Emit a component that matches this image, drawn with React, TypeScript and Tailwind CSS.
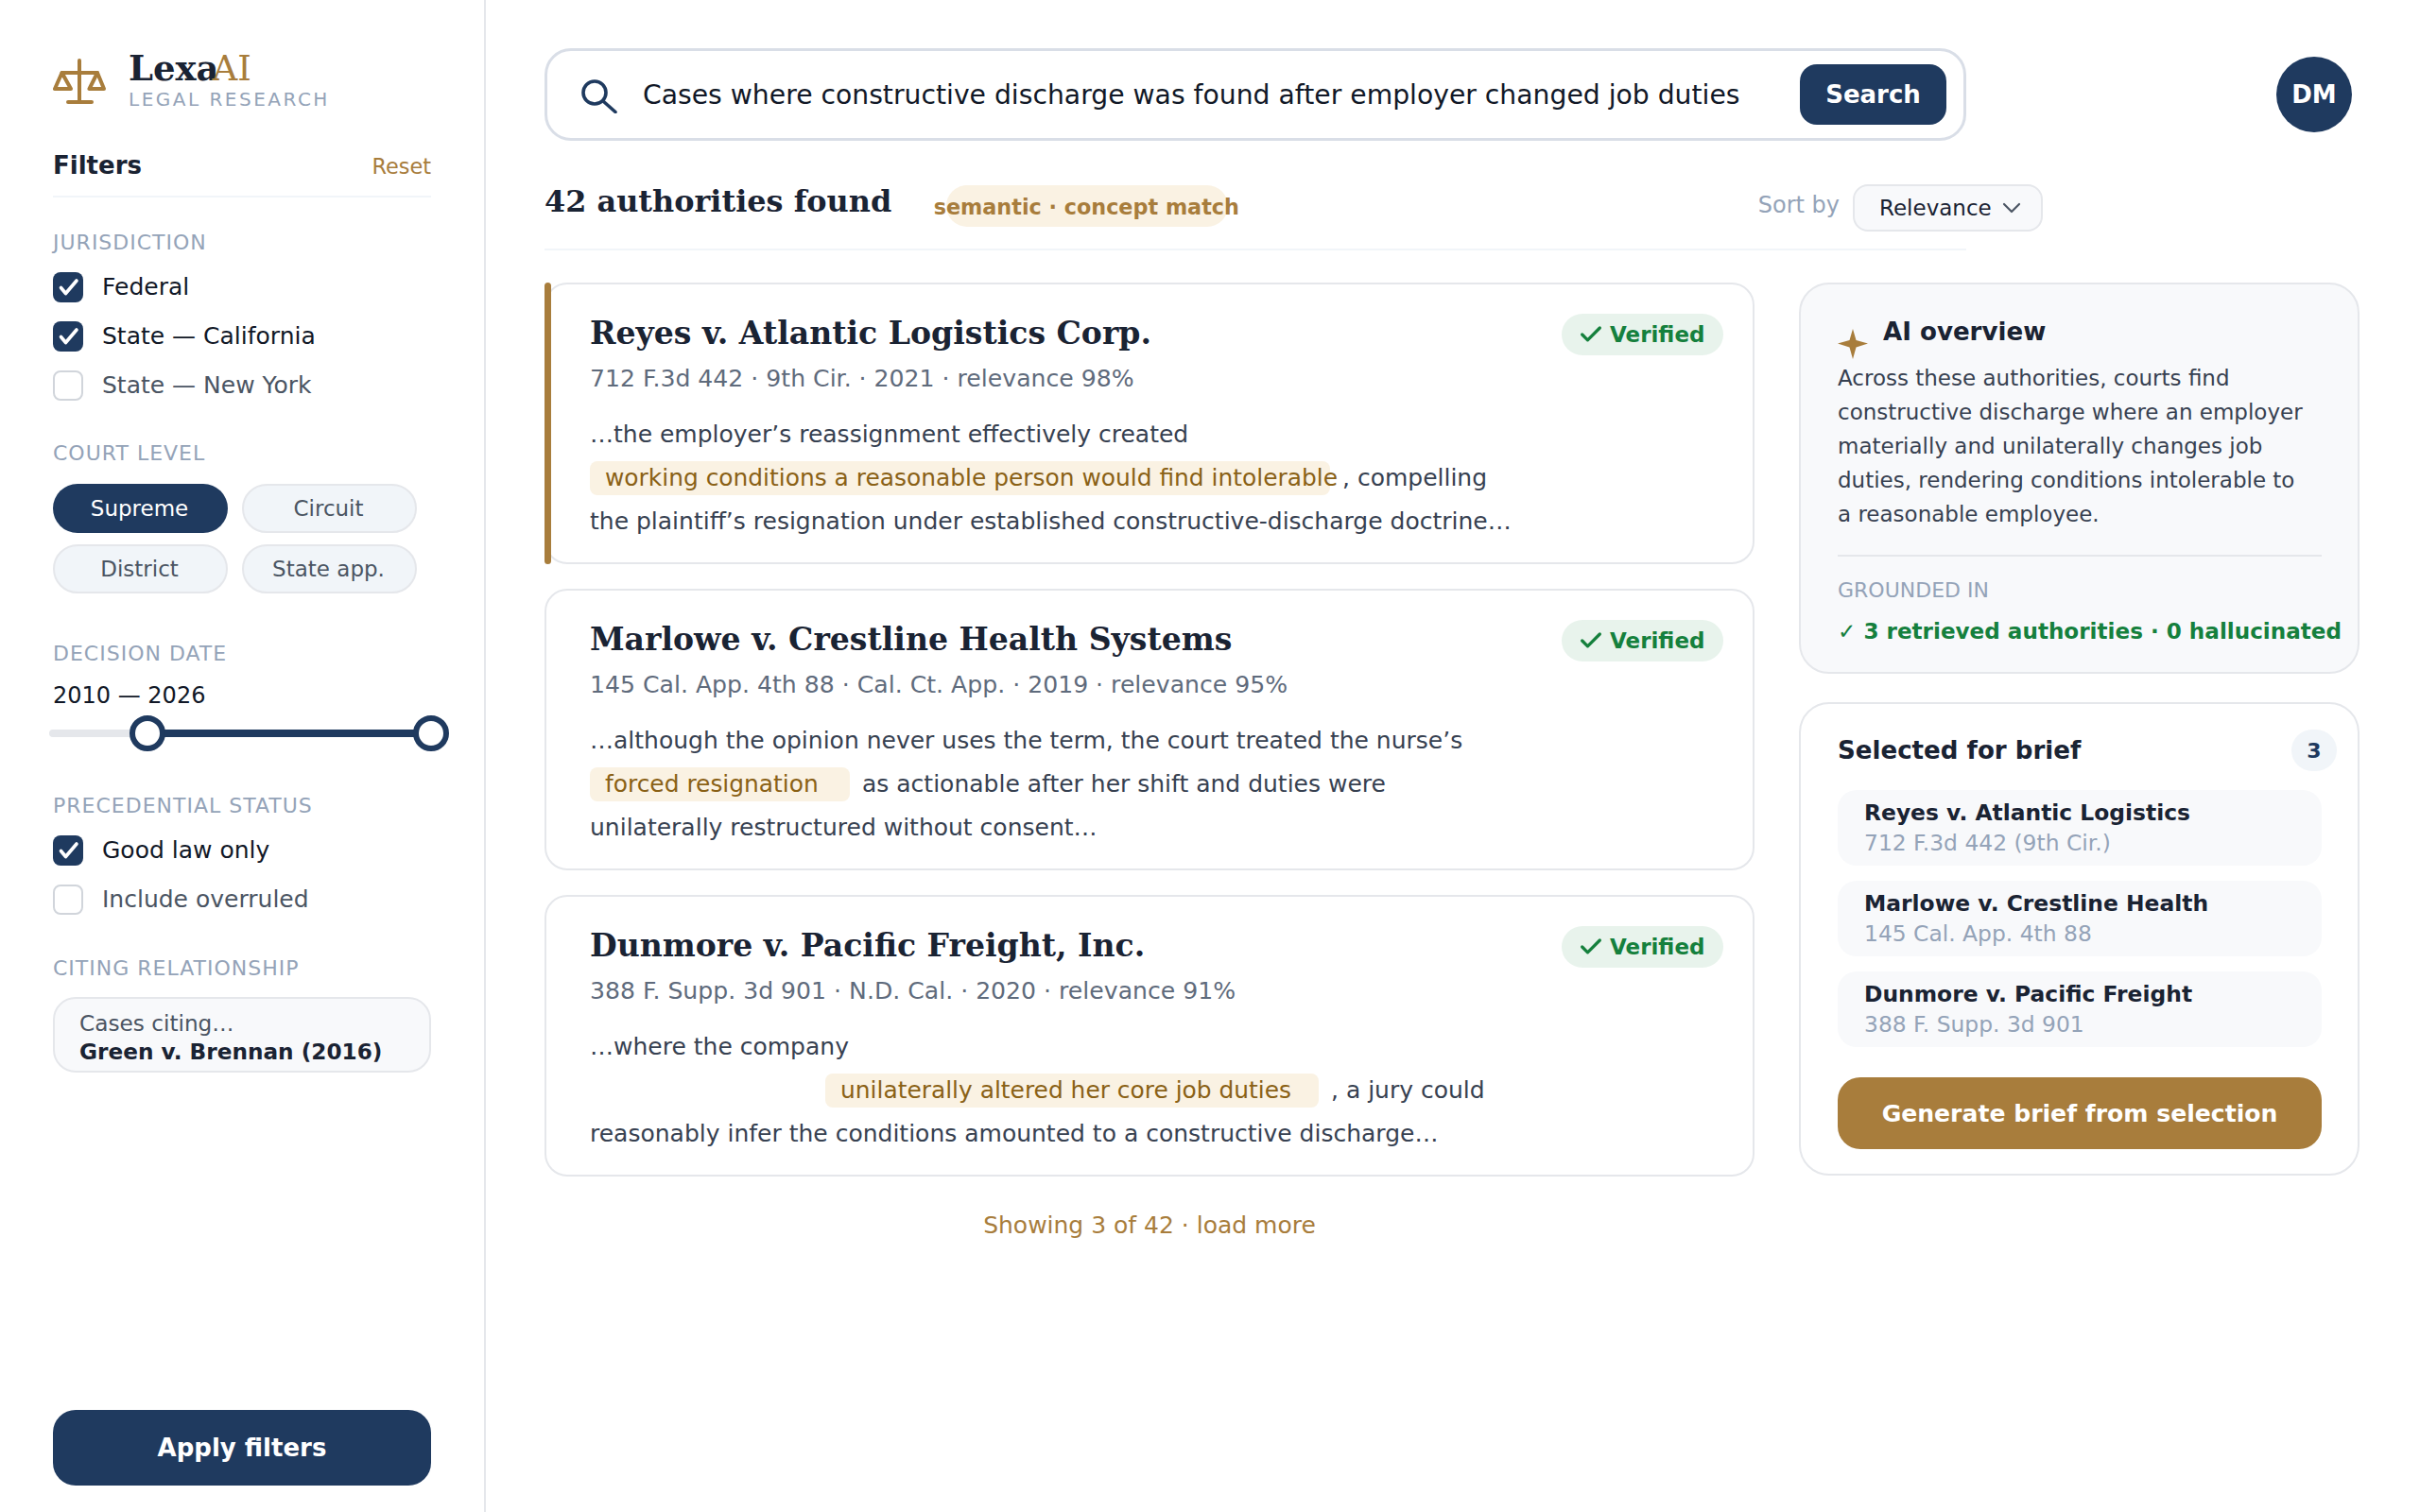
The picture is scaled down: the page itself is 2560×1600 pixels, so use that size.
import { Check, ChevronDown } from 'lucide-react';

const sans = "font-['DejaVu_Sans',sans-serif]";
const serif = "font-['DejaVu_Serif',serif]";

function Label({ children }: { children: string }) {
  return <div className="text-[22px] leading-[26px] tracking-[1px] text-[#94a3b8]">{children}</div>;
}

function CheckRow({ label, checked }: { label: string; checked?: boolean }) {
  return (
    <div className="flex h-[32px] items-center gap-[20px]">
      {checked ? (
        <span className="flex h-[32px] w-[32px] items-center justify-center rounded-[8px] bg-[#1f3a5f]">
          <svg width="32" height="32" viewBox="0 0 32 32" fill="none" stroke="white" strokeWidth="3.6" strokeLinecap="round" strokeLinejoin="round">
            <path d="M8.5 16.5L13.5 22.5L25 9" />
          </svg>
        </span>
      ) : (
        <span className="h-[32px] w-[32px] rounded-[8px] border-2 border-[#d1d5db] bg-white" />
      )}
      <span className={`text-[25px] ${checked ? 'text-[#111827]' : 'text-[#4b5563]'}`}>{label}</span>
    </div>
  );
}

function Pill({ label, active }: { label: string; active?: boolean }) {
  return (
    <div
      className={`flex h-[52px] w-[185px] items-center justify-center rounded-full pr-[2px] text-[23px] ${
        active ? 'bg-[#1f3a5f] text-white' : 'border-2 border-[#e5e7eb] bg-[#f1f5f9] text-[#4b5563]'
      }`}
    >
      {label}
    </div>
  );
}

function Verified() {
  return (
    <div className="flex h-[44px] w-[171px] shrink-0 items-center gap-[6px] rounded-full bg-[#e8f3ec] pl-[17px] text-[23px] font-bold text-[#15803d]">
      <Check size={28} strokeWidth={2.8} />
      Verified
    </div>
  );
}

function Mark({ text, width }: { text: string; width: string }) {
  return (
    <span className={`flex h-[36px] items-center whitespace-nowrap rounded-[8px] bg-[#faf2e3] pl-[16px] text-[24.9px] text-[#8a6116] ${width}`}>
      {text}
    </span>
  );
}

function CaseCard({ title, meta, accent, children }: { title: string; meta: string; accent?: boolean; children: React.ReactNode }) {
  return (
    <div className="relative h-[298px] rounded-[24px] border-2 border-[#e5e7eb] bg-white pl-[46px] pr-[31px] pt-[31px]">
      {accent && <div className="absolute -left-[2px] -top-[2px] h-[298px] w-[7px] rounded-full bg-[#a87d3c]" />}
      <div className="flex items-start justify-between">
        <div className={`${serif} -mt-[1px] text-[33.1px] font-bold leading-[44px] text-[#1a2333]`}>{title}</div>
        <Verified />
      </div>
      <div className="mt-[9px] text-[25.15px] leading-[32px] text-[#5f6b7c]">{meta}</div>
      <div className="mt-[20px] text-[25px] text-[#374151]">{children}</div>
    </div>
  );
}

function Line({ children, className = '' }: { children: React.ReactNode; className?: string }) {
  return <div className={`flex h-[46px] items-center whitespace-nowrap ${className}`}>{children}</div>;
}

function BriefItem({ name, cite }: { name: string; cite: string }) {
  return (
    <div className="flex h-[80px] flex-col justify-center rounded-[20px] bg-[#f8f9fb] pl-[28px] text-[23.4px] leading-[32px]">
      <div className="font-bold text-[#1a2333]">{name}</div>
      <div className="text-[#94a3b8]">{cite}</div>
    </div>
  );
}

export default function App() {
  return (
    <div className={`${sans} flex h-[1600px] w-[2560px] overflow-hidden bg-white text-[#1a2333]`}>
      <aside className="flex h-full w-[514px] shrink-0 flex-col border-r-2 border-[#e5e7eb] pl-[56px] pr-[56px]">
        <div className="mt-[54px] flex h-[62px] items-start gap-[24px]">
          <svg width="56" height="48" viewBox="0 0 56 48" fill="none" stroke="#a87d3c" strokeWidth="4" strokeLinecap="round" strokeLinejoin="round" className="mt-[8px] shrink-0">
            <path d="M28 2V46M16 46H41M9.5 15H47" />
            <path d="M9.5 15L2 32H19ZM47 15L38.5 32H54Z" />
          </svg>
          <div>
            <div className={`${serif} text-[37px] font-bold leading-[36px]`}>
              Lexa<span className="-ml-[7px] font-normal text-[#a87d3c]">AI</span>
            </div>
            <div className="mt-[3px] text-[20px] leading-[22px] tracking-[2.5px] text-[#94a3b8]">LEGAL RESEARCH</div>
          </div>
        </div>

        <div className="mt-[42px] flex h-[51px] items-start justify-between border-b-2 border-[#f1f5f9]">
          <span className="text-[26px] font-bold leading-[34px]">Filters</span>
          <span className="mt-[4px] text-[22.4px] leading-[28px] text-[#a87d3c]">Reset</span>
        </div>

        <div className="mt-[35px]"><Label>JURISDICTION</Label></div>
        <div className="mt-[18px] flex flex-col gap-[20px]">
          <CheckRow label="Federal" checked />
          <CheckRow label="State — California" checked />
          <CheckRow label="State — New York" />
        </div>

        <div className="mt-[43px]"><Label>COURT LEVEL</Label></div>
        <div className="mt-[19px] flex w-[385px] flex-wrap gap-x-[15px] gap-y-[12px]">
          <Pill label="Supreme" active />
          <Pill label="Circuit" />
          <Pill label="District" />
          <Pill label="State app." />
        </div>

        <div className="mt-[51px]"><Label>DECISION DATE</Label></div>
        <div className="mt-[15px] text-[24px] leading-[32px] text-[#111827]">2010 — 2026</div>
        <div className="relative mt-[5px] h-[38px] w-[400px]">
          <div className="absolute -left-[4px] top-[15px] h-[8px] w-[408px] rounded-full bg-[#e5e7eb]" />
          <div className="absolute left-[100px] top-[15px] h-[8px] w-[300px] bg-[#1f3a5f]" />
          <div className="absolute left-[81px] top-0 h-[38px] w-[38px] rounded-full border-[6px] border-[#1f3a5f] bg-white" />
          <div className="absolute left-[381px] top-0 h-[38px] w-[38px] rounded-full border-[6px] border-[#1f3a5f] bg-white" />
        </div>

        <div className="mt-[45px]"><Label>PRECEDENTIAL STATUS</Label></div>
        <div className="mt-[18px] flex flex-col gap-[20px]">
          <CheckRow label="Good law only" checked />
          <CheckRow label="Include overruled" />
        </div>

        <div className="mt-[44px]"><Label>CITING RELATIONSHIP</Label></div>
        <div className="mt-[17px] flex h-[80px] flex-col justify-center rounded-[24px] border-2 border-[#e5e7eb] bg-[#f8f9fb] pl-[26px] pt-[5px] text-[23.2px] leading-[30px]">
          <div className="text-[#4b5563]">Cases citing…</div>
          <div className="font-bold">Green v. Brennan (2016)</div>
        </div>

        <button className="mb-[28px] mt-auto flex h-[80px] w-[400px] shrink-0 items-center justify-center rounded-[24px] bg-[#1f3a5f] text-[26px] font-bold text-white">
          Apply filters
        </button>
      </aside>

      <main className="min-w-0 flex-1 pl-[62px]">
        <div className="mt-[51px] flex items-start">
          <div className="flex h-[98px] w-[1504px] items-center rounded-[28px] border-[3px] border-[#d9dee7] pl-[36px] pr-[18px]">
            <svg width="38" height="36" viewBox="0 0 38 36" fill="none" stroke="#1f3a5f" strokeWidth="3.6" strokeLinecap="round" className="mt-[3px] shrink-0">
              <circle cx="14" cy="14" r="12" />
              <path d="M23 23L36 34.5" />
            </svg>
            <span className="ml-[27px] whitespace-nowrap pt-[2px] text-[28.24px] text-[#111827]">
              Cases where constructive discharge was found after employer changed job duties
            </span>
            <button className="ml-auto flex h-[64px] w-[155px] items-center justify-center rounded-[18px] bg-[#1f3a5f] text-[26px] font-bold text-white">
              Search
            </button>
          </div>
          <div className="ml-[328px] mt-[9px] flex h-[80px] w-[80px] items-center justify-center rounded-full bg-[#1f3a5f] text-[26px] font-bold text-white">
            DM
          </div>
        </div>

        <div className="mt-[46px] flex h-[70px] w-[1504px] items-start border-b-2 border-[#f1f5f9]">
          <span className={`${serif} -mt-[2px] text-[31.9px] font-bold leading-[40px]`}>42 authorities found</span>
          <div className="ml-[58px] mt-[1px] flex h-[44px] w-[298px] justify-center rounded-full bg-[#faf2e3] pr-[2px] text-[22.3px] font-bold leading-[46px] text-[#a87d3c]">
            <span className="whitespace-nowrap">semantic · concept match</span>
          </div>
          <span className="ml-auto text-[24px] leading-[44px] text-[#94a3b8]">Sort by</span>
          <div className="ml-[14px] mr-[-81px] flex h-[50px] w-[201px] items-center gap-[5px] rounded-[16px] border-2 border-[#e5e7eb] bg-[#f8f9fb] pl-[26px] text-[23px]">
            Relevance
            <ChevronDown size={32} strokeWidth={1.6} className="shrink-0 text-[#4b5563]" />
          </div>
        </div>

        <div className="mt-[34px] flex items-start gap-[47px]">
          <div className="w-[1280px] shrink-0">
            <div className="flex flex-col gap-[26px]">
              <CaseCard accent title="Reyes v. Atlantic Logistics Corp." meta="712 F.3d 442 · 9th Cir. · 2021 · relevance 98%">
                <Line>…the employer’s reassignment effectively created</Line>
                <Line>
                  <Mark text="working conditions a reasonable person would find intolerable" width="w-[783px]" />
                  <span className="ml-[13px]">, compelling</span>
                </Line>
                <Line>the plaintiff’s resignation under established constructive-discharge doctrine…</Line>
              </CaseCard>
              <CaseCard title="Marlowe v. Crestline Health Systems" meta="145 Cal. App. 4th 88 · Cal. Ct. App. · 2019 · relevance 95%">
                <Line>…although the opinion never uses the term, the court treated the nurse’s</Line>
                <Line>
                  <Mark text="forced resignation" width="w-[275px]" />
                  <span className="ml-[13px]">as actionable after her shift and duties were</span>
                </Line>
                <Line>unilaterally restructured without consent…</Line>
              </CaseCard>
              <CaseCard title="Dunmore v. Pacific Freight, Inc." meta="388 F. Supp. 3d 901 · N.D. Cal. · 2020 · relevance 91%">
                <Line>…where the company</Line>
                <Line className="pl-[249px]">
                  <Mark text="unilaterally altered her core job duties" width="w-[522px]" />
                  <span className="ml-[13px]">, a jury could</span>
                </Line>
                <Line>reasonably infer the conditions amounted to a constructive discharge…</Line>
              </CaseCard>
            </div>
            <div className="mt-[36px] text-center text-[25px] leading-[32px] text-[#a87d3c]">Showing 3 of 42 · load more</div>
          </div>

          <div className="flex w-[593px] shrink-0 flex-col gap-[30px]">
            <div className="h-[414px] rounded-[32px] border-2 border-[#e5e7eb] bg-[#f8f9fb] pl-[39px] pr-[38px] pt-[33px]">
              <div className="flex h-[46px] items-start gap-[16px]">
                <svg width="32" height="32" viewBox="0 0 32 32" className="mt-[14px] shrink-0" fill="#a87d3c">
                  <path d="M16 0L19.5 12L32 15.5L19.5 19.5L16 32L12.5 19.5L0 15.5L12.5 12Z" />
                </svg>
                <span className="text-[26.1px] font-bold leading-[34px]">AI overview</span>
              </div>
              <p className="mt-[2px] whitespace-nowrap text-[23px] leading-[36px] text-[#374151]">
                Across these authorities, courts find
                <br />
                constructive discharge where an employer
                <br />
                materially and unilaterally changes job
                <br />
                duties, rendering conditions intolerable to
                <br />
                a reasonable employee.
              </p>
              <div className="mt-[25px] h-[2px] w-[512px] bg-[#e5e7eb]" />
              <div className="mt-[22px] text-[22px] leading-[28px] text-[#94a3b8]">GROUNDED IN</div>
              <div className="mt-[13px] whitespace-nowrap text-[23.1px] font-bold leading-[32px] text-[#15803d]">
                <span className="font-normal">✓</span> 3 retrieved authorities · 0 hallucinated
              </div>
            </div>

            <div className="h-[501px] rounded-[32px] border-2 border-[#e5e7eb] bg-white pl-[39px] pt-[27px]">
              <div className="flex h-[44px] items-center">
                <span className="pt-[2px] text-[26.1px] font-bold">Selected for brief</span>
                <span className="ml-auto mr-[22px] flex h-[44px] w-[48px] items-center justify-center rounded-full bg-[#f1f5f9] text-[22px] font-bold text-[#1f3a5f]">3</span>
              </div>
              <div className="mt-[20px] flex w-[512px] flex-col gap-[16px]">
                <BriefItem name="Reyes v. Atlantic Logistics" cite="712 F.3d 442 (9th Cir.)" />
                <BriefItem name="Marlowe v. Crestline Health" cite="145 Cal. App. 4th 88" />
                <BriefItem name="Dunmore v. Pacific Freight" cite="388 F. Supp. 3d 901" />
              </div>
              <button className="mt-[32px] flex h-[76px] w-[512px] items-center justify-center rounded-[24px] bg-[#a87d3c] pt-[2px] text-[25.1px] font-bold text-white">
                Generate brief from selection
              </button>
            </div>
          </div>
        </div>
      </main>
    </div>
  );
}
